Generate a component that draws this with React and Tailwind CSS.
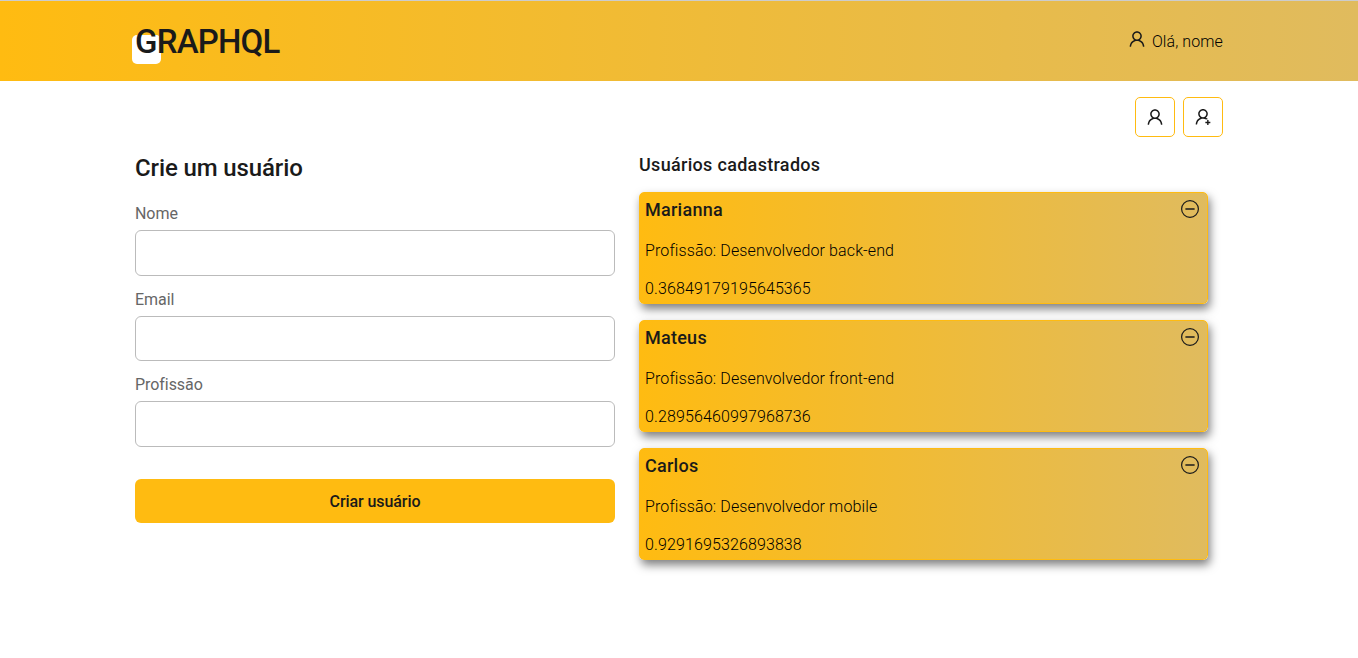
import { AiOutlineUser, AiOutlineUserAdd } from "react-icons/ai";

const users = [
  { name: "Marianna", job: "Desenvolvedor back-end", id: "0.36849179195645365" },
  { name: "Mateus", job: "Desenvolvedor front-end", id: "0.28956460997968736" },
  { name: "Carlos", job: "Desenvolvedor mobile", id: "0.9291695326893838" },
];

function MinusCircle() {
  return (
    <svg width="20" height="20" viewBox="0 0 20 20" fill="none" stroke="currentColor" className="mt-0.5">
      <circle cx="10" cy="10" r="8.4" strokeWidth="1.2" />
      <path d="M5.4 10h9.2" strokeWidth="1.5" />
    </svg>
  );
}

function Field({ label, boxClass }) {
  return (
    <label className="flex flex-col">
      <span className="pt-0.5 leading-6 tracking-[-0.06px] text-[#666]">{label}</span>
      <input className={"mt-1 w-full rounded-md border border-[#bbb] bg-white px-3 outline-none " + boxClass} />
    </label>
  );
}

function UserCard({ user }) {
  return (
    <li className="h-28 rounded-[5px] border border-[#ffbb11] bg-linear-to-r/srgb from-[#ffbb11] to-[#e0bb5e] pl-[5px] pr-[7px] shadow-[2px_5px_10px_rgba(0,0,0,0.5)]">
      <div className="flex items-start justify-between pt-1">
        <h3 className="text-lg font-medium leading-[26px] tracking-[0.26px]">{user.name}</h3>
        <MinusCircle />
      </div>
      <p className="mt-4 font-light leading-6 tracking-[0.12px] text-black">Profissão: {user.job}</p>
      <p className="mt-3.5 font-light leading-6 tracking-[0.12px] text-black">{user.id}</p>
    </li>
  );
}

export default function App() {
  return (
    <div className="min-h-[658px] bg-white font-['Roboto',sans-serif] text-base text-[#1a1a1a]">
      <header className="h-[81px] border-t border-[#ccc] bg-linear-to-r/srgb from-[#ffbb11] to-[#e0bb5e]">
        <div className="mx-auto flex h-20 w-[1088px] items-center justify-between">
          <div className="relative">
            <span className="absolute -left-[3px] top-[17px] h-[29px] w-[29px] rounded-[5px] bg-white" />
            <h1 className="relative pt-0.5 text-[33px] font-medium leading-[44px] tracking-[-0.8px]">GRAPHQL</h1>
          </div>
          <div className="flex items-center gap-[5px] font-light">
            <AiOutlineUser size={20} className="-mt-1" />
            <span className="pt-0.5 tracking-[0.1px] text-black">Olá, nome</span>
          </div>
        </div>
      </header>
      <main className="mx-auto w-[1088px]">
        <div className="flex justify-end gap-2 pt-4">
          <button className="flex h-10 w-10 items-center justify-center rounded-[5px] border border-[#ffbb11]">
            <AiOutlineUser size={20} />
          </button>
          <button className="flex h-10 w-10 items-center justify-center rounded-[5px] border border-[#ffbb11]">
            <AiOutlineUserAdd size={20} />
          </button>
        </div>
        <div className="flex gap-6">
          <form className="flex w-[480px] flex-col pt-3.5">
            <h2 className="mb-[15px] text-2xl font-medium leading-[34px] tracking-[-0.12px]">Crie um usuário</h2>
            <div className="flex flex-col gap-2.5">
              <Field label="Nome" boxClass="h-[46px]" />
              <Field label="Email" boxClass="h-[45px]" />
              <Field label="Profissão" boxClass="h-[46px]" />
            </div>
            <button type="button" className="mt-8 h-11 rounded-md bg-[#ffbb11] pt-0.5 font-medium tracking-[-0.08px]">Criar usuário</button>
          </form>
          <section className="w-[568.5px] pt-[15px]">
            <h2 className="text-lg font-medium leading-[26px] tracking-[0.31px]">Usuários cadastrados</h2>
            <ul className="mt-3.5 flex flex-col gap-4">
              {users.map((user) => (
                <UserCard key={user.id} user={user} />
              ))}
            </ul>
          </section>
        </div>
      </main>
    </div>
  );
}
